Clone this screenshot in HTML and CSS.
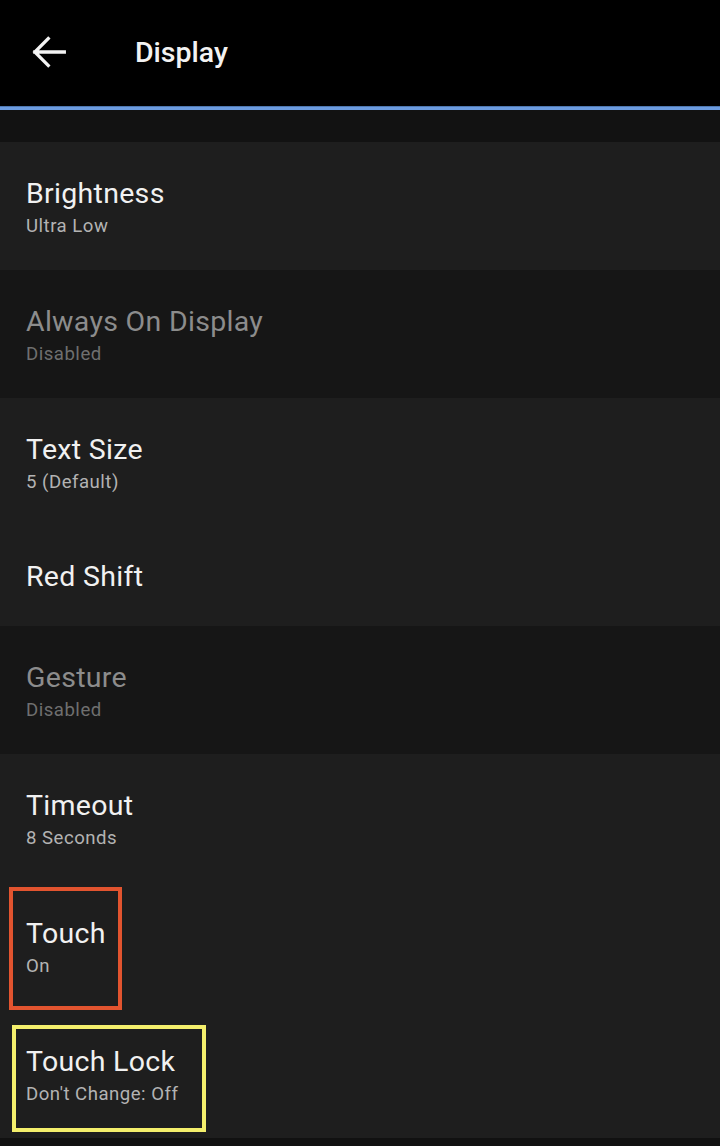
FILE: index.html
```html
<!DOCTYPE html>
<html>
<head>
<meta charset="utf-8">
<link rel="stylesheet" href="styles.css">
</head>
<body>
<div class="app">
  <header class="topbar">
    <svg class="back" viewBox="0 0 24 24" width="46" height="46">
      <path d="M20 12H4.6M11.6 5 4.6 12l7 7" fill="none" stroke="#f4f4f4" stroke-width="1.7" stroke-linecap="square"/>
    </svg>
    <div class="title">Display</div>
  </header>
  <div class="accent"></div>
  <div class="spacer"></div>
  <div class="list">
    <div class="row">
      <div class="t">Brightness</div>
      <div class="s">Ultra Low</div>
    </div>
    <div class="row disabled">
      <div class="t">Always On Display</div>
      <div class="s">Disabled</div>
    </div>
    <div class="row">
      <div class="t">Text Size</div>
      <div class="s">5 (Default)</div>
    </div>
    <div class="row single">
      <div class="t">Red Shift</div>
    </div>
    <div class="row disabled">
      <div class="t">Gesture</div>
      <div class="s">Disabled</div>
    </div>
    <div class="row">
      <div class="t">Timeout</div>
      <div class="s">8 Seconds</div>
    </div>
    <div class="row">
      <div class="t">Touch</div>
      <div class="s">On</div>
      <div class="mark mark-orange"></div>
    </div>
    <div class="row">
      <div class="t">Touch Lock</div>
      <div class="s">Don't Change: Off</div>
      <div class="mark mark-yellow"></div>
    </div>
  </div>
</div>
</body>
</html>
```

FILE: styles.css
```css
* { box-sizing: border-box; }
html, body {
  margin: 0;
  padding: 0;
  background: #111111;
  font-family: Roboto, "Noto Sans", "Liberation Sans", sans-serif;
}
.app {
  width: 720px;
  height: 1146px;
  overflow: hidden;
  background: #111111;
}
.topbar {
  height: 106px;
  background: #000000;
  display: flex;
  align-items: center;
  padding-left: 26px;
}
.back {
  display: block;
  flex: none;
  margin-top: -2px;
}
.title {
  margin-left: 63px;
  color: #f2f2f2;
  font-size: 28.5px;
  font-weight: 500;
  line-height: 34px;
  margin-top: -1px;
}
.accent {
  height: 4px;
  background: #6c9ce0;
  border-top: 1px solid #4f78b0;
}
.spacer {
  height: 32px;
  background: #121212;
}
.list {
  display: flex;
  flex-direction: column;
}
.row {
  position: relative;
  height: 128px;
  background: #1e1e1e;
  padding: 6px 0 0 26px;
  display: flex;
  flex-direction: column;
  justify-content: center;
}
.row.single {
  height: 100px;
  padding-top: 2px;
}
.row.disabled {
  background: #161616;
}
.t {
  font-size: 28.5px;
  letter-spacing: 0.3px;
  line-height: 34px;
  color: #f1f1f1;
}
.s {
  font-size: 18.6px;
  letter-spacing: 0.5px;
  line-height: 31px;
  color: #b3b3b3;
}
.disabled .t { color: #8c8c8c; }
.disabled .s { color: #6f6f6f; }
.mark {
  position: absolute;
  border-style: solid;
  border-width: 4px;
  pointer-events: none;
}
.mark-orange {
  left: 9px;
  top: 5px;
  width: 113px;
  height: 123px;
  border-color: #e2542f;
}
.mark-yellow {
  left: 12px;
  top: 15px;
  width: 194px;
  height: 107px;
  border-color: #f4ef6c;
}
```
